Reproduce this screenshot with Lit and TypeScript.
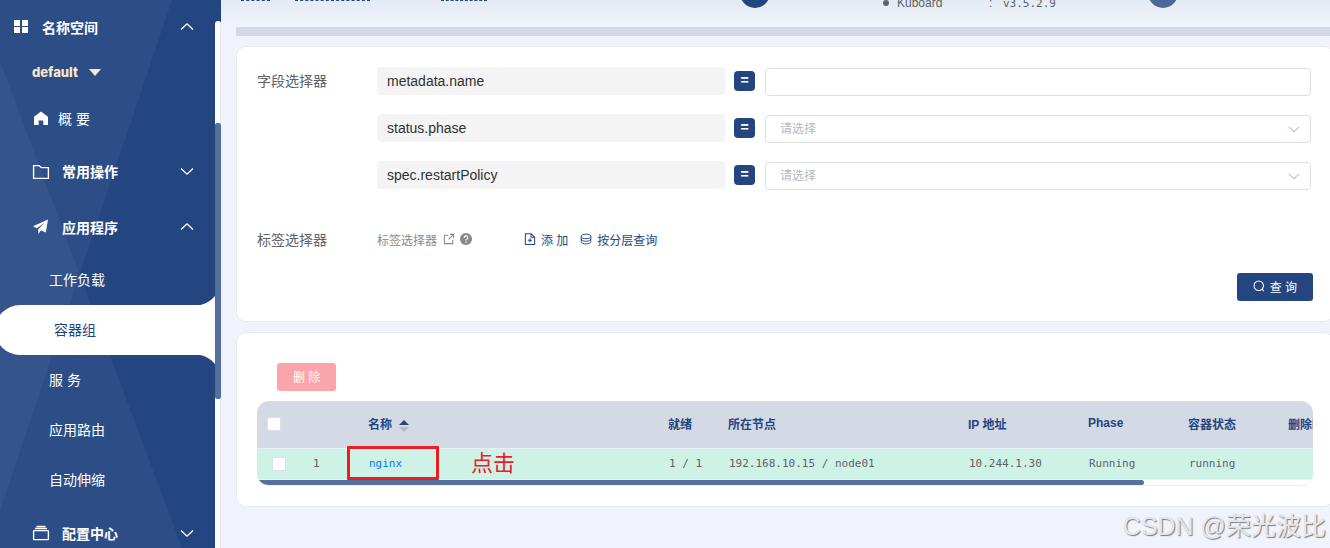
import { LitElement, html, css, svg } from "lit";
import { customElement, property, state } from "lit/decorators.js";
import { classMap } from "lit/directives/class-map.js";

const glyphs: Record<string, unknown> = {
  grid: svg`<g fill="currentColor"><rect x="0" y="0" width="6" height="6"/><rect x="8" y="0" width="6" height="6"/><rect x="0" y="7" width="6" height="6"/><rect x="8" y="7" width="6" height="6"/></g>`,
  home: svg`<path fill="currentColor" d="M7 .5 13.6 5.4Q14 5.7 14 6.200V14H9.300V9.600H4.700V14H0V6.200Q0 5.700.4 5.400Z"/>`,
  folder: svg`<path fill="none" stroke="currentColor" stroke-width="1.400" d="M.6 2.600H6.200L8.200 4.600H15.400V15.400H.6Z"/>`,
  plane: svg`<path fill="currentColor" d="M15 .5 0 7.200 3.900 9.200 12 3.400 5.300 10.200V15L8 11.400 12.800 13.500Z"/>`,
  box: svg`<g fill="none" stroke="currentColor" stroke-width="1.400"><rect x=".6" y="5.600" width="14.800" height="9" rx=".6"/><path d="M2 3.600H14M3.500 1.400H12.500" stroke-width="1.500"/></g>`,
  up: svg`<path fill="none" stroke="currentColor" stroke-width="1.300" d="M1 9.500 7 3.800 13 9.500"/>`,
  down: svg`<path fill="none" stroke="currentColor" stroke-width="1.300" d="M1 4.500 7 10.200 13 4.500"/>`,
  external: svg`<path fill="none" stroke="currentColor" stroke-width="1.200" d="M6 2.600H1.600V12.400H11.400V8M8 1.600H12.400V6M12.400 1.600 6.500 7.500"/>`,
  help: svg`<circle cx="7" cy="7" r="7" fill="currentColor"/><path fill="none" stroke="#fff" stroke-width="1.400" d="M4.900 5.500A2.100 2.100 0 1 1 7.900 7.300Q7 7.700 7 8.700M7 9.900V11.300"/>`,
  add: svg`<path fill="none" stroke="currentColor" stroke-width="1.200" d="M1.600.8H8.300L12.400 4.900V13.300H1.600ZM8.200 1V5H12.200M7 6V11M4.500 8.500H9.500"/>`,
  layers: svg`<g fill="none" stroke="currentColor" stroke-width="1.100"><ellipse cx="7" cy="4" rx="5.600" ry="2.600"/><path d="M1.400 4V10.200C1.400 13.600 12.600 13.600 12.600 10.200V4M1.400 7.100C1.400 10.500 12.600 10.500 12.600 7.100"/></g>`,
  search: svg`<circle cx="6.700" cy="6.700" r="5.500" fill="none" stroke="currentColor" stroke-width="1.200"/><path stroke="currentColor" stroke-width="1.300" d="M10.500 10.500 12.600 13"/>`,
};

@customElement("k-icon")
export class KIcon extends LitElement {
  @property() name = "grid";
  @property({ type: Number }) box = 14;

  static styles = css`
    :host { display: inline-flex; flex: none; }
    .glyph { display: block; width: 100%; height: 100%; overflow: visible; }
  `;

  render() {
    return html`<svg class="glyph" viewBox="0 0 ${this.box} ${this.box}" aria-hidden="true">${glyphs[this.name]}</svg>`;
  }
}

@customElement("k-sidebar")
export class KSidebar extends LitElement {
  @state() private active = "容器组";

  private links = ["工作负载", "容器组", "服 务", "应用路由", "自动伸缩"];

  static styles = css`
    :host {
      display: grid;
      grid-template-columns: 1fr 6px;
      position: relative;
      overflow: hidden;
      height: 100%;
      background: #234681;
      color: #fff;
      font-size: 14px;
    }
    .facet { position: absolute; inset: 0; width: 221px; height: 548px; }
    .menu { position: relative; margin-top: -1px; overflow: hidden; }
    button { border: 0; background: none; color: inherit; font: inherit; padding: 0; text-align: left; cursor: pointer; }
    a { color: inherit; text-decoration: none; }
    .group { display: flex; align-items: center; box-sizing: border-box; width: 100%; height: 56px; padding: 0 21px 1px 33px; font-weight: 700; }
    .group.top { padding-left: 14px; }
    .group k-icon { width: 16px; height: 16px; margin-right: 13px; }
    .group.top k-icon { width: 14px; height: 14px; margin-right: 14px; }
    .group k-icon.arrow { width: 14px; height: 14px; margin: 0 0 0 auto; }
    .space { display: flex; align-items: center; gap: 11px; height: 34px; margin-bottom: 4px; padding-left: 32px; color: #fee6c8; font: 800 13px Inter, sans-serif; }
    .caret { border: 6px solid transparent; border-top: 7px solid #fee6c8; border-bottom: 0; }
    .item { display: flex; align-items: center; box-sizing: border-box; height: 50px; padding: 0 0 2px 49px; }
    .item.home { padding: 0 0 0 34px; }
    .item.home k-icon { width: 14px; height: 14px; margin-right: 10px; }
    .item.active { position: relative; margin-left: -5px; padding-left: 59px; border-radius: 25px 0 0 25px; background: #fff; color: #234681; }
    .item.active::before, .item.active::after { content: ""; position: absolute; right: 0; width: 20px; height: 10px; }
    .item.active::before { bottom: 100%; background: radial-gradient(circle at 0 -15px, transparent 25px, #fff 26px); }
    .item.active::after { top: 100%; background: radial-gradient(circle at 0 25px, transparent 25px, #fff 26px); }
    .scroll { position: relative; display: flex; flex-direction: column; margin-top: 21px; padding-top: 102px; background: #fdfdfd; border-radius: 3px 3px 0 0; box-shadow: inset -1px 0 #e6e8ee; }
    .thumb { height: 276px; border-radius: 3px; background: #56719e; box-shadow: inset 0 0 1px #234681; }
  `;

  private group(icon: string, label: string, open: boolean, top = false) {
    return html`<button class=${classMap({ group: true, top })} aria-expanded=${open}>
      <k-icon name=${icon} .box=${top ? 14 : 16}></k-icon>${label}
      <k-icon class="arrow" name=${open ? "up" : "down"}></k-icon>
    </button>`;
  }

  render() {
    return html`
      <svg class="facet" viewBox="0 0 221 548" aria-hidden="true">
        <g fill="#fff" fill-opacity=".045">
          <path d="M0 0H172L0 510Z" />
          <path d="M0 61 182 548H0Z" />
        </g>
      </svg>
      <nav class="menu">
        ${this.group("grid", "名称空间", true, true)}
        <button class="space">default<span class="caret"></span></button>
        <a class="item home" href="#overview"><k-icon name="home"></k-icon>概 要</a>
        ${this.group("folder", "常用操作", false)}
        ${this.group("plane", "应用程序", true)}
        ${this.links.map((label) => html`<a
          href="#workload"
          class=${classMap({ item: true, active: label === this.active })}
          @click=${() => (this.active = label)}
        >${label}</a>`)}
        ${this.group("box", "配置中心", false)}
      </nav>
      <div class="scroll"><div class="thumb"></div></div>
    `;
  }
}

@customElement("k-filters")
export class KFilters extends LitElement {
  private fields = [
    { name: "metadata.name", select: false },
    { name: "status.phase", select: true },
    { name: "spec.restartPolicy", select: true },
  ];

  static styles = css`
    :host { display: block; padding: 20px; color: #606266; font-size: 14px; }
    .section { display: grid; grid-template-columns: 120px 1fr; padding-right: 2px; }
    .title { line-height: 28px; }
    .fields { display: grid; gap: 18px; }
    .row { display: grid; grid-template-columns: 348fr 21px 547fr; column-gap: 9px; height: 29px; }
    .name { height: 28px; padding-left: 10px; border-radius: 4px; background: #f4f4f4; color: #303133; line-height: 28px; }
    .op { height: 20px; margin-top: 4px; border-radius: 4px; background: #234681; color: #fff; font-size: 14px; font-weight: 700; line-height: 19px; text-align: center; }
    .control { position: relative; align-self: end; height: 28px; margin-left: 1px; }
    input, select { display: block; box-sizing: border-box; width: 100%; height: 28px; padding: 0 14px; border: 1px solid #dcdfe6; border-radius: 4px; background: #fff; color: #b4b8c0; font: inherit; font-size: 12px; appearance: none; }
    .control k-icon { position: absolute; right: 11px; top: 8px; width: 12px; height: 12px; color: #c0c4cc; pointer-events: none; }
    .labels { margin-top: 36px; }
    .tools { display: flex; align-items: center; height: 26px; font-size: 12px; }
    .tools a { display: flex; align-items: center; gap: 6px; color: #888; text-decoration: none; }
    .tools k-icon { width: 12px; height: 12px; }
    .help { margin-left: 5px; color: #888; }
    button { display: flex; align-items: center; gap: 5px; padding: 0; border: 0; background: none; color: #234681; font: inherit; font-size: 12px; cursor: pointer; }
    .add { margin: 0 12px 0 52px; }
    .foot { display: flex; justify-content: flex-end; margin-top: 19px; }
    .query { height: 28px; padding: 0 16px 2px; border-radius: 3px; background: #234681; color: #fff; }
    .query k-icon { width: 12px; height: 12px; }
  `;

  render() {
    return html`
      <div class="section">
        <span class="title">字段选择器</span>
        <div class="fields">
          ${this.fields.map((f, i) => html`<div class="row">
            <label class="name" for="field${i}">${f.name}</label>
            <span class="op">=</span>
            <div class="control">
              ${f.select
                ? html`<select id="field${i}"><option>请选择</option></select><k-icon name="down"></k-icon>`
                : html`<input id="field${i}" type="text" />`}
            </div>
          </div>`)}
        </div>
      </div>
      <div class="section labels">
        <span class="title">标签选择器</span>
        <div class="tools">
          <a href="#selector">标签选择器<k-icon name="external"></k-icon></a>
          <k-icon class="help" name="help"></k-icon>
          <button class="add"><k-icon name="add"></k-icon>添 加</button>
          <button><k-icon name="layers"></k-icon>按分层查询</button>
        </div>
      </div>
      <div class="foot"><button class="query"><k-icon name="search"></k-icon>查 询</button></div>
    `;
  }
}

@customElement("k-pods")
export class KPods extends LitElement {
  private columns = [
    { title: "就绪", width: 60 },
    { title: "所在节点", width: 240 },
    { title: "IP 地址", width: 120 },
    { title: "Phase", width: 100 },
    { title: "容器状态", width: 100 },
    { title: "删除时间", width: 100 },
  ];

  private pods = [
    { name: "nginx", cells: ["1 / 1", "192.168.10.15 / node01", "10.244.1.30", "Running", "running", ""] },
  ];

  static styles = css`
    :host { display: block; padding: 30px 20px 20px; font-size: 12px; }
    .delete { display: block; height: 28px; margin: 0 0 10px 20px; padding: 0 16px 2px; border: 0; border-radius: 3px; background: #fba4ac; color: #fff; font: inherit; }
    .wrap { position: relative; }
    .frame { overflow: hidden; border-radius: 12px; border-bottom: 1px solid #ebeef5; }
    table { width: 1260px; table-layout: fixed; border-collapse: collapse; }
    th, td { box-sizing: border-box; padding: 0 0 0 11px; border-bottom: 1px solid #ebeef5; text-align: left; white-space: nowrap; }
    th { height: 47px; padding-bottom: 2px; background: #d3d9e5; color: #234681; font-weight: 700; }
    td { height: 31px; padding-left: 12px; background: #cff2e7; color: #606266; font: 11px "DejaVu Sans Mono", monospace; }
    th.pick { padding: 0 0 0 10px; }
    td.pick { padding-left: 15px; }
    td.index { padding-left: 16px; }
    input { appearance: none; display: block; box-sizing: border-box; width: 14px; height: 14px; margin: 0; border: 1px solid #dcdfe6; border-radius: 2px; background: #fff; }
    a { color: #007af5; text-decoration: none; }
    .sort { display: inline-grid; gap: 2px; margin-left: 7px; vertical-align: middle; }
    .asc, .desc { border: 5px solid transparent; }
    .asc { border-top: 0; border-bottom-color: #234681; }
    .desc { border-bottom: 0; border-top-color: #b8bac0; }
    .bar { height: 5px; }
    .thumb { width: 84%; height: 5px; border-radius: 0 3px 3px 0; background: #56719e; }
    .mark { position: absolute; left: 90px; top: 45px; box-sizing: border-box; width: 92px; height: 34px; border: 3px solid #ed1c24; border-radius: 1px; }
    .note { position: absolute; left: 214px; top: 47px; color: #ed1c24; font-size: 22px; line-height: 32px; }
  `;

  render() {
    return html`
      <button class="delete">删 除</button>
      <div class="wrap">
        <div class="frame">
          <table>
            <colgroup>
              <col width="40" /><col width="60" /><col width="300" />
              ${this.columns.map((c) => html`<col width=${c.width} />`)}
              <col />
            </colgroup>
            <thead>
              <tr>
                <th class="pick"><input type="checkbox" aria-label="全选" /></th>
                <th></th>
                <th>名称<span class="sort"><i class="asc"></i><i class="desc"></i></span></th>
                ${this.columns.map((c) => html`<th>${c.title}</th>`)}
                <th></th>
              </tr>
            </thead>
            <tbody>
              ${this.pods.map((p, i) => html`<tr>
                <td class="pick"><input type="checkbox" aria-label=${p.name} /></td>
                <td class="index">${i + 1}</td>
                <td><a href="#pod">${p.name}</a></td>
                ${p.cells.map((c) => html`<td>${c}</td>`)}
                <td></td>
              </tr>`)}
            </tbody>
          </table>
          <div class="bar"><div class="thumb"></div></div>
        </div>
        <span class="mark"></span>
        <span class="note">点击</span>
      </div>
    `;
  }
}

@customElement("app-root")
export class AppRoot extends LitElement {
  static styles = css`
    :host {
      display: grid;
      grid-template-columns: 221px minmax(0, 1fr);
      position: relative;
      height: 100vh;
      overflow: hidden;
      background: #f0f3fb;
      font-family: "Liberation Sans", "Noto Sans CJK SC", sans-serif;
    }
    .main { margin-right: -4px; overflow: hidden; }
    .head { position: relative; height: 27px; overflow: hidden; background: linear-gradient(#e4ebf5, #f0f3fb); color: #606266; }
    .dash { position: absolute; top: 0; height: 0; border-top: 1px dashed #234681; }
    .d1 { left: 20px; width: 29px; }
    .d2 { left: 74px; width: 75px; }
    .d3 { left: 220px; width: 46px; }
    .dot { position: absolute; top: -22px; width: 30px; height: 30px; border-radius: 50%; background: #234681; }
    .c1 { left: 519px; }
    .c2 { left: 927px; background: #4a6898; }
    .version { position: absolute; left: 662px; top: -6px; display: grid; grid-template-columns: 14px 92px 14px auto; align-items: center; height: 18px; font-size: 12px; }
    .bullet { width: 6px; height: 6px; border-radius: 50%; background: #606266; }
    .mono { font: 11px "DejaVu Sans Mono", monospace; }
    .rule { height: 9px; margin: 0 0 10px 15px; background: #d3d9e5; }
    .card { margin: 0 0 10px 15px; border: 1px solid #e6ebf3; border-radius: 10px; background: #fff; }
    .watermark { position: absolute; right: 4px; bottom: 8px; color: #e4e6ea; font-size: 25px; line-height: 28px; text-shadow: 1px 1px 1px #777b84; }
  `;

  render() {
    return html`
      <k-sidebar></k-sidebar>
      <main class="main">
        <header class="head">
          <i class="dash d1"></i><i class="dash d2"></i><i class="dash d3"></i>
          <i class="dot c1"></i><i class="dot c2"></i>
          <div class="version"><i class="bullet"></i><span>Kuboard</span><span>:</span><span class="mono">v3.5.2.9</span></div>
        </header>
        <div class="rule"></div>
        <section class="card"><k-filters></k-filters></section>
        <section class="card"><k-pods></k-pods></section>
      </main>
      <span class="watermark">CSDN @荣光波比</span>
    `;
  }
}
